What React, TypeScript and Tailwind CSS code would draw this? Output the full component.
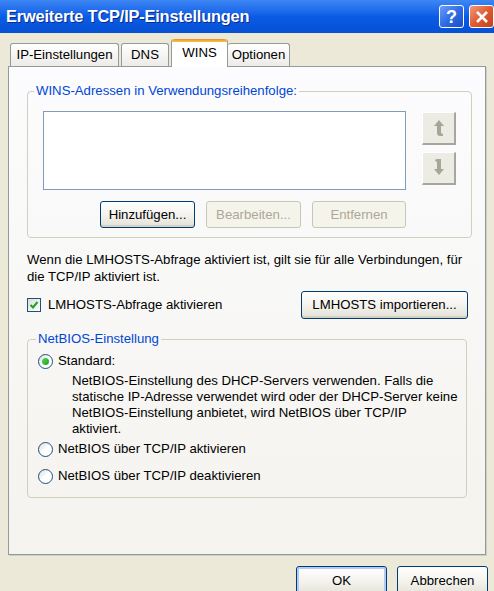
import React from "react";

const font = { fontFamily: '"Liberation Sans", Arial, sans-serif' };

function XpButton({
  label,
  disabled,
  isDefault,
  className = "",
}: {
  label: string;
  disabled?: boolean;
  isDefault?: boolean;
  className?: string;
}) {
  if (disabled) {
    return (
      <div
        className={`flex items-center justify-center rounded-[3px] border border-[#c9c7ba] bg-[#f5f4ea] text-[#aca899] ${className}`}
      >
        {label}
      </div>
    );
  }
  return (
    <div
      className={`flex items-center justify-center rounded-[3px] border border-[#003c74] bg-gradient-to-b from-white via-[#f4f3ee] to-[#e3e1d6] text-black ${
        isDefault ? "shadow-[inset_0_0_0_2px_#b3cbf3]" : "shadow-[inset_0_-2px_0_#d6d0c5]"
      } ${className}`}
    >
      {label}
    </div>
  );
}

function ArrowButton({ down }: { down?: boolean }) {
  return (
    <div className="flex h-[33px] w-[34px] items-center justify-center border-r-2 border-b-2 border-[#a7a69c] border-l border-t border-l-white border-t-white bg-[#ecebe4]">
      <svg width="14" height="18" viewBox="0 0 14 18">
        {down ? (
          <path
            d="M3 2 Q3 0 5 0 L9 0 L9 10 L12 10 L7 16 L2 10 L5 10 L5 4 Q5 2 3 2 Z"
            fill="#a8a797"
          />
        ) : (
          <path
            d="M7 1 L12 7 L9 7 L9 13 Q9 15 11 15 L11 17 L8 17 Q5 17 5 14 L5 7 L2 7 Z"
            fill="#a8a797"
          />
        )}
      </svg>
    </div>
  );
}

function Radio({ checked }: { checked?: boolean }) {
  return (
    <div className="flex h-[15px] w-[15px] shrink-0 items-center justify-center rounded-full border border-[#1c5180] bg-gradient-to-br from-[#dcdcd7] via-white to-white">
      {checked && (
        <div className="h-[7px] w-[7px] rounded-full bg-gradient-to-br from-[#55d551] to-[#21a121]" />
      )}
    </div>
  );
}

export default function App() {
  return (
    <div
      className="relative flex h-[591px] w-[494px] flex-col overflow-hidden bg-[#ece9d8] text-[13.2px] text-black"
      style={font}
    >
      {/* Title bar */}
      <div className="flex h-[33px] shrink-0 items-center justify-between bg-gradient-to-b from-[#3d86f4] via-[#0a5ce6] to-[#0650d4] pl-[6px] pr-0">
        <span className="text-[16.4px] font-bold tracking-[-0.2px] text-white [text-shadow:1px_1px_0_#0a2b8a]">
          Erweiterte TCP/IP-Einstellungen
        </span>
        <div className="flex items-center gap-[5px]">
          <div className="flex h-[23px] w-[25px] items-center justify-center rounded-[3px] border border-white bg-gradient-to-br from-[#6d9cf5] via-[#2f6ce6] to-[#1b4fc7] text-[18px] font-bold leading-none text-white">
            ?
          </div>
          <div className="flex h-[23px] w-[25px] items-center justify-center rounded-[3px] border border-white bg-gradient-to-br from-[#ee9a7d] via-[#e05a2e] to-[#c2401c]">
            <svg width="14" height="14" viewBox="0 0 14 14">
              <path d="M2 2 L12 12 M12 2 L2 12" stroke="white" strokeWidth="2.6" />
            </svg>
          </div>
        </div>
      </div>

      {/* Body */}
      <div className="flex flex-1 flex-col px-[8px] pt-[5px]">
        {/* Tabs */}
        <div className="flex h-[28px] items-end pl-[2px]">
          <div className="flex h-[23px] w-[109px] items-center justify-center rounded-t-[3px] border border-b-0 border-[#919b9c] bg-gradient-to-b from-white to-[#ecebe6]">
            IP-Einstellungen
          </div>
          <div className="ml-[2px] flex h-[23px] w-[48px] items-center justify-center rounded-t-[3px] border border-b-0 border-[#919b9c] bg-gradient-to-b from-white to-[#ecebe6]">
            DNS
          </div>
          <div className="relative z-10 ml-[2px] -mb-px flex h-[28px] w-[57px] flex-col rounded-t-[3px] border border-b-0 border-[#919b9c] border-t-0 bg-white">
            <div className="h-[3px] rounded-t-[3px] bg-gradient-to-b from-[#e68b2c] to-[#ffc73c]" />
            <div className="flex flex-1 items-center justify-center pb-[3px]">WINS</div>
          </div>
          <div className="flex h-[23px] w-[62px] items-center justify-center rounded-t-[3px] border border-b-0 border-l-0 border-[#919b9c] bg-gradient-to-b from-white to-[#ecebe6]">
            Optionen
          </div>
        </div>

        {/* Panel */}
        <div className="flex h-[489px] flex-col border border-[#919b9c] bg-gradient-to-b from-[#fcfcfe] to-[#f4f3ee] px-[18px] pt-[16px] shadow-[1px_1px_0_#d0cec3]">
          <fieldset className="h-[155px] rounded-[4px] border border-[#d0d0bf] px-[15px]">
            <legend className="-ml-[9px] px-[2px] leading-[16px] text-[#0046d5]">
              WINS-Adressen in Verwendungsreihenfolge:
            </legend>
            <div className="mt-[12px] flex">
              <div className="h-[79px] w-[363px] border border-[#7f9db9] bg-white" />
              <div className="ml-[16px] mt-[1px] flex flex-col gap-[7px]">
                <ArrowButton />
                <ArrowButton down />
              </div>
            </div>
            <div className="mt-[11px] flex w-[363px] justify-end gap-[11px]">
              <XpButton label="Hinzufügen..." className="h-[27px] w-[95px]" />
              <XpButton label="Bearbeiten..." disabled className="h-[27px] w-[95px]" />
              <XpButton label="Entfernen" disabled className="h-[27px] w-[94px]" />
            </div>
          </fieldset>

          <p className="mt-[13px] leading-[17px]">
            <span className="block whitespace-nowrap">
              Wenn die LMHOSTS-Abfrage aktiviert ist, gilt sie für alle Verbindungen, für
            </span>
            <span className="block">die TCP/IP aktiviert ist.</span>
          </p>

          <div className="mt-[6px] flex items-center justify-between">
            <div className="flex items-center gap-[7px]">
              <div className="flex h-[14px] w-[14px] items-center justify-center border border-[#1c5180] bg-gradient-to-br from-[#dcdcd7] to-white">
                <svg width="10" height="10" viewBox="0 0 10 10">
                  <path d="M1.5 5 L4 7.5 L8.5 2" stroke="#21a121" strokeWidth="2" fill="none" />
                </svg>
              </div>
              <span>LMHOSTS-Abfrage aktivieren</span>
            </div>
            <XpButton label="LMHOSTS importieren..." className="mr-[-1px] h-[28px] w-[167px]" />
          </div>

          <fieldset className="mt-[12px] h-[167px] rounded-[4px] border border-[#d0d0bf] pl-[10px] pr-[8px]">
            <legend className="-ml-[2px] px-[2px] leading-[16px] text-[#0046d5]">
              NetBIOS-Einstellung
            </legend>
            <div className="mt-[4px] flex h-[20px] items-center gap-[5px]">
              <Radio checked />
              <span>Standard:</span>
            </div>
            <p className="mt-[2px] pl-[34px] leading-[16px]">
              <span className="block whitespace-nowrap">
                NetBIOS-Einstellung des DHCP-Servers verwenden. Falls die
              </span>
              <span className="block whitespace-nowrap">
                statische IP-Adresse verwendet wird oder der DHCP-Server keine
              </span>
              <span className="block whitespace-nowrap">
                NetBIOS-Einstellung anbietet, wird NetBIOS über TCP/IP
              </span>
              <span className="block">aktiviert.</span>
            </p>
            <div className="mt-[2px] flex h-[20px] items-center gap-[5px]">
              <Radio />
              <span>NetBIOS über TCP/IP aktivieren</span>
            </div>
            <div className="mt-[7px] flex h-[20px] items-center gap-[5px]">
              <Radio />
              <span>NetBIOS über TCP/IP deaktivieren</span>
            </div>
          </fieldset>
        </div>

        {/* Footer buttons */}
        <div className="-mr-[2px] mt-[11px] flex justify-end gap-[10px]">
          <XpButton label="OK" isDefault className="h-[30px] w-[91px]" />
          <XpButton label="Abbrechen" className="h-[30px] w-[91px]" />
        </div>
      </div>
    </div>
  );
}
